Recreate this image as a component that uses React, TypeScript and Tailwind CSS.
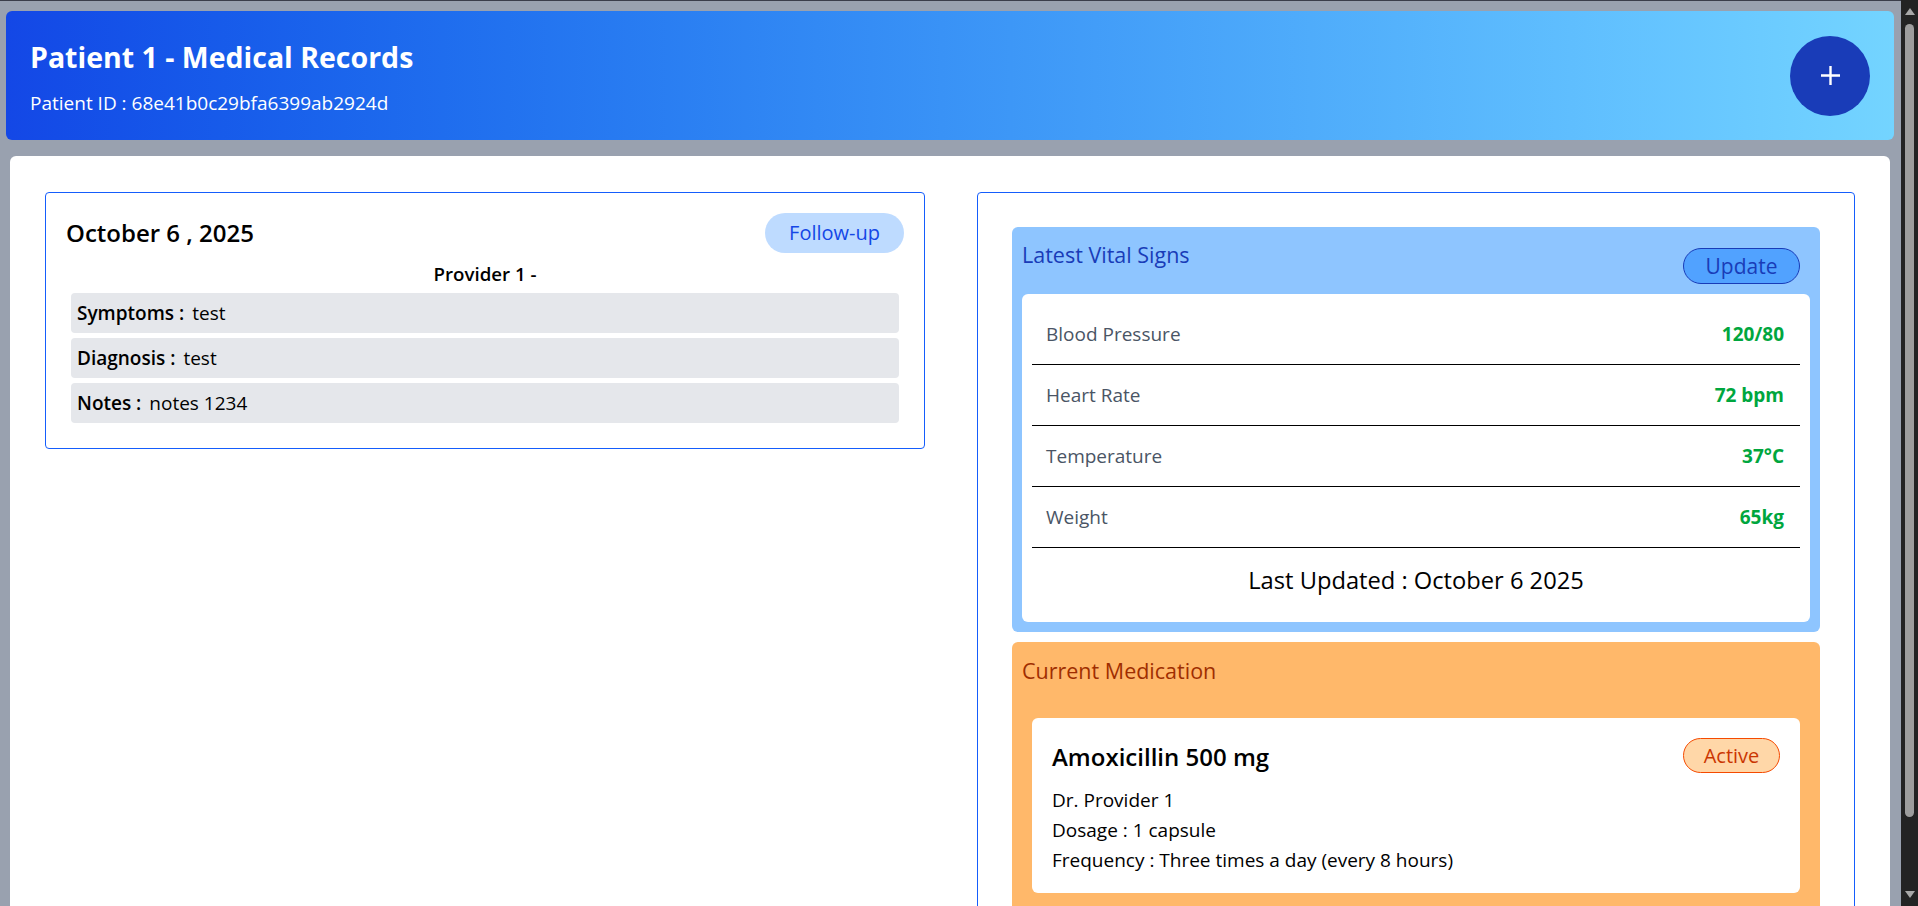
import React from "react";

const vitals = [
  { label: "Blood Pressure", value: "120/80" },
  { label: "Heart Rate", value: "72 bpm" },
  { label: "Temperature", value: "37°C" },
  { label: "Weight", value: "65kg" },
];

const notes = [
  { label: "Symptoms :", value: "test" },
  { label: "Diagnosis :", value: "test" },
  { label: "Notes :", value: "notes 1234" },
];

function Scrollbar(): React.ReactElement {
  return (
    <div className="flex w-[17px] shrink-0 flex-col items-center bg-[#232323] pt-[8px]">
      <svg width="10" height="7" viewBox="0 0 10 7">
        <path d="M5 0L10 7H0Z" fill="#a8a8a8" />
      </svg>
      <div className="mt-[9px] h-[793px] w-[9px] rounded-full bg-[#9d9d9d]" />
      <div className="flex-1" />
      <svg width="10" height="7" viewBox="0 0 10 7" className="mb-[8px]">
        <path d="M0 0H10L5 7Z" fill="#a8a8a8" />
      </svg>
    </div>
  );
}

function VisitCard(): React.ReactElement {
  return (
    <div className="rounded border border-blue-600 p-5">
      <div className="flex items-center justify-between">
        <h2 className="text-2xl font-semibold text-black">October 6 , 2025</h2>
        <span className="flex h-10 items-center rounded-full bg-blue-200 px-6 text-[20px] leading-7 font-medium text-blue-700">
          Follow-up
        </span>
      </div>
      <p className="mt-[7px] text-center text-[18.7px] leading-7 font-semibold text-black">Provider 1 -</p>
      <div className="mt-[5px] mb-[5px] flex flex-col gap-[5px]">
        {notes.map((n) => (
          <div key={n.label} className="mx-[5px] h-10 rounded bg-gray-200 p-1.5 text-[19px] leading-7 text-black">
            <span className="font-semibold">{n.label}</span>
            <span className="ml-2">{n.value}</span>
          </div>
        ))}
      </div>
    </div>
  );
}

function VitalSigns(): React.ReactElement {
  return (
    <div className="rounded-md bg-blue-300 p-2.5">
      <div className="flex h-[57px] items-center justify-between">
        <h3 className="mt-[4px] self-start text-[21.5px] leading-7 font-medium text-blue-800">Latest Vital Signs</h3>
        <button
          type="button"
          className="mr-[10px] flex h-[36px] w-[117px] items-center justify-center rounded-full border border-blue-800 bg-blue-400 text-[21px] leading-7 font-medium text-blue-800"
        >
          Update
        </button>
      </div>
      <div className="rounded-md bg-white p-2.5">
        {vitals.map((v) => (
          <div
            key={v.label}
            className="flex justify-between border-b border-black py-4 pl-[14px] pr-[16px] text-[19px] leading-7"
          >
            <span className="text-gray-600">{v.label}</span>
            <span className="font-bold text-green-600">{v.value}</span>
          </div>
        ))}
        <p className="py-4 text-center text-[23.7px] leading-8 text-black">Last Updated : October 6 2025</p>
      </div>
    </div>
  );
}

function Medication(): React.ReactElement {
  return (
    <div className="mt-2.5 rounded-md bg-orange-300 p-2.5 pb-10">
      <h3 className="mt-[5px] text-[21.5px] leading-7 font-medium text-orange-800">Current Medication</h3>
      <div className="mx-[10px] mt-[33px] rounded-md bg-white p-5 pb-[18px]">
        <div className="flex items-center justify-between">
          <h4 className="mt-[2px] text-2xl font-semibold text-black">Amoxicillin 500 mg</h4>
          <span className="flex h-[35px] w-[97px] items-center justify-center rounded-full border border-orange-600 bg-orange-200 text-[20px] leading-7 font-medium text-orange-700">
            Active
          </span>
        </div>
        <div className="mt-3 text-[19px] leading-[30px] text-black">
          <p>Dr. Provider 1</p>
          <p>Dosage : 1 capsule</p>
          <p>Frequency : Three times a day (every 8 hours)</p>
        </div>
      </div>
    </div>
  );
}

export default function App(): React.ReactElement {
  return (
    <div className="flex h-[906px] w-full overflow-hidden bg-gray-400 font-['Open_Sans',sans-serif]">
      <div className="flex min-w-0 flex-1 flex-col border-t border-[#3a3d4a]">
        <header className="mt-[10px] ml-[6px] mr-[7px] flex h-[129px] shrink-0 items-center justify-between rounded-md bg-linear-to-r from-blue-700 to-sky-300 px-6">
          <div className="pt-[4px]">
            <h1 className="text-[28.5px] leading-9 font-bold text-white">Patient 1 - Medical Records</h1>
            <p className="mt-[14px] text-[19px] leading-7 text-white">Patient ID : 68e41b0c29bfa6399ab2924d</p>
          </div>
          <button
            type="button"
            className="flex h-20 w-20 items-center justify-center rounded-full bg-blue-800 text-white"
            aria-label="Add record"
          >
            <svg width="19" height="19" viewBox="0 0 19 19">
              <path d="M9.5 0V19M0 9.5H19" stroke="white" strokeWidth="2.4" />
            </svg>
          </button>
        </header>
        <main className="mt-[16px] ml-[10px] mr-[11px] flex-1 rounded-t-md bg-white px-[35px] pt-[36px]">
          <div className="grid grid-cols-[880px_878px] items-start gap-[52px]">
            <VisitCard />
            <div className="rounded border border-blue-600 p-[34px]">
              <VitalSigns />
              <Medication />
            </div>
          </div>
        </main>
      </div>
      <Scrollbar />
    </div>
  );
}
